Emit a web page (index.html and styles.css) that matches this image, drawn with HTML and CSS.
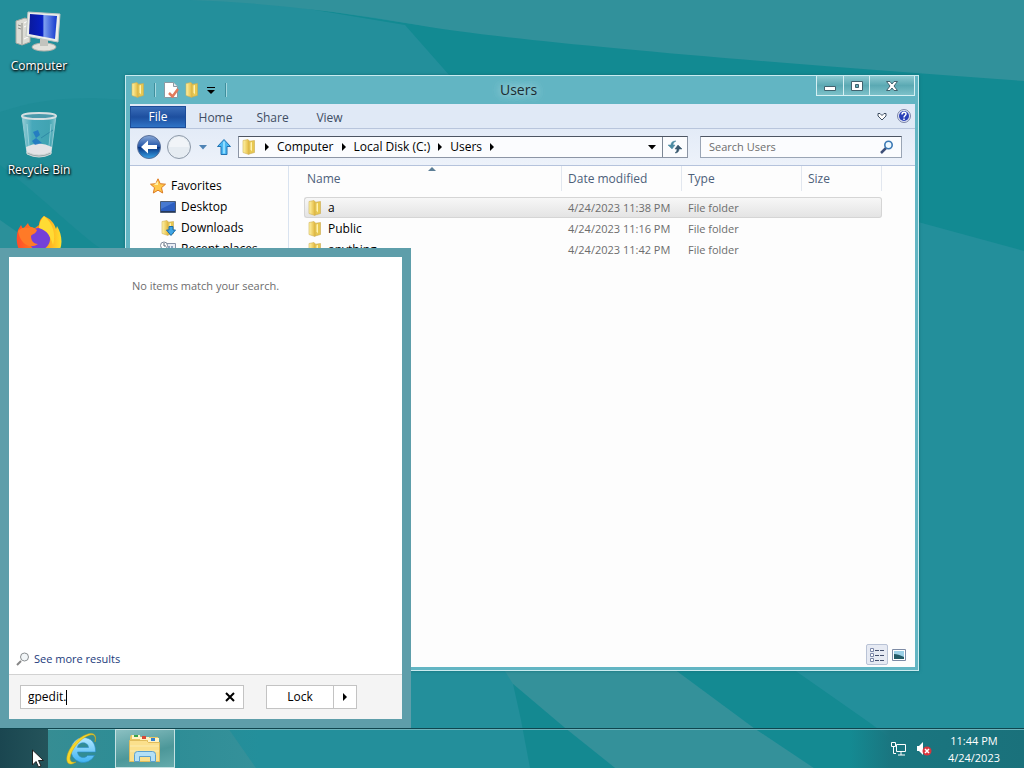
FILE: index.html
```html
<!DOCTYPE html>
<html lang="en">
<head>
  <meta charset="UTF-8" />
  <meta name="viewport" content="width=device-width, initial-scale=1.0" />
  <title>Users</title>
  <link rel="stylesheet" href="styles.css">
</head>
<body>
  <!-- shared gradients and icons -->
  <svg class="defs" aria-hidden="true">
    <defs>
      <linearGradient id="gold" x1="0" x2="1" y1="0" y2="0">
        <stop offset="0" stop-color="#fff3a8" /><stop offset="1" stop-color="#e3b93c" />
      </linearGradient>
      <linearGradient id="screen" x1="0" x2="1" y1="0" y2="0">
        <stop offset="0" stop-color="#0a1a9c" /><stop offset=".48" stop-color="#0820c4" /><stop offset=".54" stop-color="#7fa0f0" /><stop offset="1" stop-color="#1237cc" />
      </linearGradient>
      <linearGradient id="glass" x1="0" x2="1" y1="0" y2="0">
        <stop offset="0" stop-color="#b8dfe6" stop-opacity=".8" /><stop offset=".3" stop-color="#58b4c9" stop-opacity=".7" /><stop offset=".8" stop-color="#57b3c4" stop-opacity=".6" /><stop offset="1" stop-color="#a5d7de" stop-opacity=".8" />
      </linearGradient>
      <linearGradient id="fire" x1="0" x2="1" y1="0" y2="0">
        <stop offset="0" stop-color="#ff4b2b" /><stop offset=".55" stop-color="#ff9018" /><stop offset="1" stop-color="#ffdf2e" />
      </linearGradient>
      <linearGradient id="ball" x1="0" x2="0" y1="0" y2="1">
        <stop offset="0" stop-color="#8aa9d8" /><stop offset=".48" stop-color="#2456a8" /><stop offset=".5" stop-color="#062f7d" /><stop offset="1" stop-color="#39a4e8" />
      </linearGradient>
      <linearGradient id="iblue" x1="0" x2="0" y1="0" y2="1">
        <stop offset="0" stop-color="#b4e9ff" /><stop offset="1" stop-color="#3fb3f2" />
      </linearGradient>
    </defs>
    <symbol id="folder" viewBox="0 0 16 16">
      <path d="M7 2.500 13.500 1.500v12L8 15z" fill="#e8c850" stroke="#c9aa50" stroke-width=".6" />
      <path d="M2 1.500 7 .5l1 1v14L2 13.500z" fill="url(#gold)" stroke="#d2b256" stroke-width=".6" />
      <path d="M9.500 3.500v7l1.500 2V3z" fill="#fff2b0" />
    </symbol>
    <symbol id="right" viewBox="0 0 6 8"><path d="M1 0l4 4-4 4z" fill="currentColor" /></symbol>
    <symbol id="down" viewBox="0 0 8 5"><path d="M0 0h8L4 4.500z" fill="currentColor" /></symbol>
  </svg>

  <main class="desktop">
    <svg class="wallpaper" viewBox="0 0 1024 768" preserveAspectRatio="none" aria-hidden="true">
      <rect width="1024" height="768" fill="#238f9b" />
      <path d="M0 112C40 98 80 96 126 100V248H0z" fill="#1f8c97" />
      <path d="M0 165C40 195 80 235 100 248H0z" fill="#178a93" />
      <path d="M0 220 40 248H0z" fill="#2b909a" />
      <path d="M255 0 418 25 1024 80V251L918 222 450 76 405 25z" fill="#128a92" />
      <path d="M190 0Q300 4 418 25T1024 81V0z" fill="#31919b" />
      <path d="M498 660H662L754 728 814 768H615L565 728 513 684z" fill="#34919a" />
      <path d="M513 684 565 728 615 768H530L521 720z" fill="#148991" />
      <path d="M662 660H780L870 723 930 768H814L754 728z" fill="#148a92" />
      <path d="M180 728H228L256 768H180z" fill="#35919a" />
    </svg>

    <nav class="shortcuts" aria-label="Desktop">
      <a class="shortcut" href="#">
        <svg width="48" height="48" viewBox="0 0 48 48" aria-hidden="true">
          <path d="M1 13l9-3 5 2v22l-8 3-6-2z" fill="#dcdcd5" stroke="#aaa9a2" />
          <path d="M7 15v21M3 17l3 1M3 20l3 1" stroke="#8e8e88" />
          <path d="M9 15l4-2M9 19l4-2M9 31l4-2" stroke="#fff" />
          <ellipse cx="29" cy="39" rx="12" ry="4" fill="#e2e2dc" stroke="#b4b3ab" />
          <path d="M25 31h8v7h-8z" fill="#c3c4be" />
          <path d="M13 4l32 2-2 28-32-6z" fill="#eceeea" stroke="#bfc6c4" />
          <path d="M15 6l27 2-2 23-26-5z" fill="url(#screen)" />
        </svg>
        <span>Computer</span>
      </a>
      <a class="shortcut" href="#">
        <svg width="48" height="48" viewBox="0 0 48 48" aria-hidden="true">
          <path d="M7 4 12 41Q24 47 36 41L41 4z" fill="url(#glass)" stroke="#8ec8d2" />
          <path d="M11 35q13-7 26 0l-1 6q-12 5-24 0z" fill="#e3e3e6" />
          <path d="M12 40q12 6 24 0v2q-12 6-24 0z" fill="#9da9ac" stroke="#d5dada" />
          <path d="M18 20l5-2 2 5-4 3zM17 29l4-3 6 5-7 2z" fill="#1b6fc4" opacity=".75" />
          <path d="M26 26l12-8" stroke="#2f8aa6" />
          <path d="M12 12l2 22M36 12l-2 22" stroke="#c8edf1" opacity=".5" />
          <ellipse cx="24" cy="4" rx="17" ry="3" fill="#4b9aab" stroke="#d5dfe1" stroke-width="2" />
        </svg>
        <span>Recycle Bin</span>
      </a>
      <a class="shortcut" href="#" aria-label="Firefox">
        <svg width="48" height="48" viewBox="0 0 48 48" aria-hidden="true">
          <path d="M29 0c7 3 10 7 12 13l1-3c9 15 5 35-17 36C8 46-2 31 3 14l3-5 2 4 5-6c1 4 3 4 7 5l4-3c0-4 2-7 5-9z" fill="url(#fire)" />
          <circle cx="24" cy="23" r="11" fill="#7440d8" />
          <path d="M3 15c4-4 7-4 11-3 3-1 5 0 8 2-1 4-5 4-6 6 0 4 2 8 7 8-9 6-18-1-20-13z" fill="#ff7a27" />
          <path d="M29 0c9 7 12 18 9 29-3-9-5-14-14-17 0-5 2-9 5-12z" fill="#ffdb34" />
        </svg>
      </a>
    </nav>

    <section class="window" aria-label="Users">
      <header class="titlebar">
        <div class="quick">
          <svg width="16" height="16" aria-hidden="true"><use href="#folder" /></svg>
          <i class="bar"></i>
          <button type="button" aria-label="Properties">
            <svg width="16" height="16" viewBox="0 0 16 16"><path d="M1.500.5h9l4 4v11h-13z" fill="#fff" stroke="#8b9aa3" /><path d="M10.500.5v4h4" fill="#e5e9ed" stroke="#8b9aa3" /><path d="M6 11l3.500 3.500L15 7" fill="none" stroke="#e27a5c" stroke-width="2.500" /></svg>
          </button>
          <button type="button" aria-label="New folder"><svg width="16" height="16"><use href="#folder" /></svg></button>
          <button type="button" aria-label="Customize toolbar">
            <svg width="8" height="7" viewBox="0 0 8 7"><path d="M0 0h8v1H0zM0 3h8L4 7z" /></svg>
          </button>
          <i class="bar"></i>
        </div>
        <h1>Users</h1>
        <div class="controls">
          <button type="button" aria-label="Minimize"><svg width="14" height="14" viewBox="0 0 14 14"><path d="M1.500 7.500h11v4h-11z" fill="#fff" stroke="#41626e" /></svg></button>
          <button type="button" aria-label="Maximize"><svg width="14" height="14" viewBox="0 0 14 14"><path d="M1.500 2.500h11v9h-11z" fill="#fff" stroke="#41626e" /><path d="M5.500 5.500h3v3h-3z" fill="#63adba" stroke="#41626e" /></svg></button>
          <button class="close" type="button" aria-label="Close"><svg width="14" height="14" viewBox="0 0 14 14"><path d="M1.500 2.500h3.500l2 2.500 2-2.500h3.500L9 7l3.500 4.500H9L7 9l-2 2.500H1.500L5 7z" fill="#fff" stroke="#41626e" /></svg></button>
        </div>
      </header>

      <div class="ribbon">
        <button class="file" type="button">File</button>
        <button type="button">Home</button>
        <button type="button">Share</button>
        <button type="button">View</button>
        <div class="ribbon-end">
          <button type="button" aria-label="Expand the ribbon"><svg width="10" height="9" viewBox="0 0 10 9"><path d="M1 1.500h2l2 2 2-2h2v2.500L5 8 1 4z" fill="#fff" stroke="#3f4f63" /></svg></button>
          <button type="button" aria-label="Help">
            <svg width="14" height="14" viewBox="0 0 14 14"><circle cx="7" cy="7" r="6.500" fill="#dfe5f5" stroke="#7d86a8" /><circle cx="7" cy="7" r="5" fill="#2a3fb8" /><path d="M5 5.500c0-3 4-3 4-.500C9 6.500 7 6.500 7 8.500M7 9.500V11" fill="none" stroke="#fff" stroke-width="1.500" /></svg>
          </button>
        </div>
      </div>

      <div class="address">
        <button type="button" aria-label="Back">
          <svg width="26" height="26" viewBox="0 0 26 26"><circle cx="13" cy="13" r="11.500" fill="url(#ball)" stroke="#586f99" /><path d="M5 13l7-6.500v4.500h9v4h-9v4.500z" fill="#fff" /></svg>
        </button>
        <button type="button" aria-label="Forward">
          <svg width="26" height="26" viewBox="0 0 26 26"><circle cx="13" cy="13" r="11.500" fill="#e6ecf2" stroke="#8d99a8" /><path d="M3 13a10 10 0 0 1 20 0z" fill="#f1f4f8" /></svg>
        </button>
        <button class="recent" type="button" aria-label="Recent locations"><svg width="8" height="5"><use href="#down" /></svg></button>
        <button class="up" type="button" aria-label="Up">
          <svg width="14" height="16" viewBox="0 0 14 16"><path d="M7 .5l6.500 7H10v8H4v-8H.5z" fill="#49b7f2" stroke="#2273b3" /><path d="M7 2.500v12" stroke="#8fdcff" stroke-width="2" /></svg>
        </button>
        <div class="path">
          <svg width="16" height="16" aria-hidden="true"><use href="#folder" /></svg>
          <svg width="6" height="8" aria-hidden="true"><use href="#right" /></svg>
          <a href="#">Computer</a>
          <svg width="6" height="8" aria-hidden="true"><use href="#right" /></svg>
          <a href="#">Local Disk (C:)</a>
          <svg width="6" height="8" aria-hidden="true"><use href="#right" /></svg>
          <a href="#">Users</a>
          <svg width="6" height="8" aria-hidden="true"><use href="#right" /></svg>
          <button class="history" type="button" aria-label="Previous locations"><svg width="8" height="5"><use href="#down" /></svg></button>
          <button class="refresh" type="button" aria-label="Refresh">
            <svg width="16" height="14" viewBox="0 0 16 14"><path d="M9 1C5 1 4 3 4 5H1l4 4 3-4H6c0-2 1-3 3-4z" fill="#4c8ba2" stroke="#4c8ba2" stroke-width=".5" /><path d="M8 13c3 0 4-2 4-4h3l-4-4-3 4h2c0 2-1 3-2 4z" fill="#38586f" stroke="#38586f" stroke-width=".5" /></svg>
          </button>
        </div>
        <div class="search">
          <input type="text" aria-label="Search Users" placeholder="Search Users" />
          <svg width="14" height="14" viewBox="0 0 14 14" aria-hidden="true"><path d="M1 13l5-5" stroke="#3e4f78" stroke-width="2.500" /><circle cx="8.500" cy="5" r="3.700" fill="#eef9ff" stroke="#3a78b4" stroke-width="1.600" /></svg>
        </div>
      </div>

      <div class="content">
        <nav class="tree" aria-label="Favorites">
          <a class="root" href="#">
            <svg width="16" height="16" viewBox="0 0 16 16" aria-hidden="true"><path d="M8 .8l2.200 4.900 5.300.5-4 3.500 1.200 5.300L8 12.200 3.300 15l1.200-5.300-4-3.500 5.300-.5z" fill="#ffc84a" stroke="#dc7b24" /><path d="M8 3v4L4 7z" fill="#fff0a8" /></svg>
            Favorites
          </a>
          <a href="#">
            <svg width="16" height="16" viewBox="0 0 16 16" aria-hidden="true"><path d="M.5 2.500h15v11H.5z" fill="#2c5ec0" stroke="#4c5c74" /><path d="M1 3h14L1 10z" fill="#4779d0" /><path d="M1 12h14v1H1z" fill="#26395c" /></svg>
            Desktop
          </a>
          <a href="#">
            <svg width="16" height="16" viewBox="0 0 16 16" aria-hidden="true"><use href="#folder" width="16" height="16" /><path d="M9 6.500h4V10h2.500L11 15.500 6.500 10H9z" fill="#3fa5e4" stroke="#1c6ba9" /></svg>
            Downloads
          </a>
          <a href="#">
            <svg width="16" height="16" viewBox="0 0 16 16" aria-hidden="true"><path d="M5.500 2.500h10v12h-10z" fill="#e9edf4" stroke="#8793a8" /><path d="M8 5h2v2H8zM11 5h2v2h-2zM8 9h2v2H8zM11 9h2v2h-2z" fill="#8ca2bf" /><circle cx="4" cy="4.500" r="3.500" fill="#fff" stroke="#7d8898" /><path d="M4 2v3h2" fill="none" stroke="#596575" /></svg>
            Recent places
          </a>
        </nav>

        <div class="list">
          <table>
            <colgroup><col><col class="c-date"><col class="c-type"><col class="c-size"></colgroup>
            <thead>
              <tr>
                <th><svg class="sort" width="8" height="4" viewBox="0 0 8 4" aria-hidden="true"><path d="M0 4l4-4 4 4z" fill="#5c7e96" /></svg>Name</th>
                <th>Date modified</th>
                <th>Type</th>
                <th>Size</th>
              </tr>
            </thead>
            <tbody>
              <tr class="selected">
                <td><svg width="16" height="16" aria-hidden="true"><use href="#folder" /></svg>a</td>
                <td>4/24/2023 11:38 PM</td>
                <td>File folder</td>
                <td></td>
              </tr>
              <tr>
                <td><svg width="16" height="16" aria-hidden="true"><use href="#folder" /></svg>Public</td>
                <td>4/24/2023 11:16 PM</td>
                <td>File folder</td>
                <td></td>
              </tr>
              <tr>
                <td><svg width="16" height="16" aria-hidden="true"><use href="#folder" /></svg>anything</td>
                <td>4/24/2023 11:42 PM</td>
                <td>File folder</td>
                <td></td>
              </tr>
            </tbody>
          </table>
          <div class="views">
            <button class="on" type="button" aria-label="Details">
              <svg width="16" height="14" viewBox="0 0 16 14"><path d="M1.500.5h3v3h-3zM1.500 5.500h3v3h-3zM1.500 10.500h3v3h-3z" fill="#fff" stroke="#7a86a8" /><path d="M6 2.500h4M11 2.500h4M6 7.500h4M11 7.500h4M6 12.500h4M11 12.500h4" stroke="#44506e" /></svg>
            </button>
            <button type="button" aria-label="Large icons">
              <svg width="14" height="12" viewBox="0 0 14 12"><path d="M.5.5h13v11H.5z" fill="#fff" stroke="#7d8ba5" /><path d="M2 2h10v8H2z" fill="#9bd0e6" /><path d="M2 5q4 0 10 3v2H2z" fill="#235b66" /></svg>
            </button>
          </div>
        </div>
      </div>
    </section>

    <section class="start" aria-label="Start menu">
      <div class="results">
        <p>No items match your search.</p>
        <a href="#">
          <svg width="14" height="14" viewBox="0 0 14 14" aria-hidden="true"><path d="M1 13l4-4" stroke="#858585" stroke-width="2" /><circle cx="8.500" cy="5" r="4" fill="#f2f6f8" stroke="#8b8f92" /></svg>
          See more results
        </a>
      </div>
      <div class="start-foot">
        <div class="query">
          <input type="text" aria-label="Search programs and files" value="gpedit." />
          <i class="caret"></i>
          <button type="button" aria-label="Clear"><svg width="10" height="10" viewBox="0 0 10 10"><path d="M1 1l8 8M9 1L1 9" stroke="#000" stroke-width="2" /></svg></button>
        </div>
        <div class="power">
          <button type="button">Lock</button>
          <button class="more" type="button" aria-label="More power options"><svg width="6" height="8"><use href="#right" /></svg></button>
        </div>
      </div>
    </section>

    <footer class="taskbar">
      <button class="start-btn" type="button" aria-label="Start"></button>
      <button class="task" type="button" aria-label="Internet Explorer">
        <svg width="32" height="34" viewBox="0 0 32 34"><path d="M17 5.500A12.500 12.500 0 1 0 28.500 23.500H21.500C19 27 12 26 11.500 20H29.500C30 11 25 5.500 17 5.500zM11.500 15.500C12 9.500 22 9 22.500 15.500z" fill="url(#iblue)" fill-rule="evenodd" stroke="#2a8fca" stroke-width=".6" /><path d="M29 10C32 0 24-1 14 6 4 13-2 26 2 31c2 2 5 1 8-1-4 1-6 0-6-4C5 18 14 6 24 3c4-1 6 1 5 7z" fill="#f5d62a" stroke="#c9a41a" stroke-width=".5" /></svg>
      </button>
      <button class="task active" type="button" aria-label="File Explorer">
        <svg width="32" height="30" viewBox="0 0 32 30"><path d="M1 3l1-2h8l2 2h17v18H1z" fill="#e9c762" /><path d="M3 1h8v4H3z" fill="#fff3c5" /><path d="M5 1h4v2H5z" fill="#38a548" /><path d="M11 3h9v3h-9z" fill="#fff3c5" /><path d="M13 2h4v3h-4z" fill="#d84a36" /><path d="M19 4h11v4H19z" fill="#fff3c5" /><path d="M22 4h4v3h-4z" fill="#3680cf" /><path d="M.5 6.500h17l2 2h11v19H.5z" fill="#fbe08c" stroke="#e0bc5c" /><path d="M1 12h29M1 17h29" stroke="#fbecb0" /><path d="M5.500 27.500v-7q0-3 3-3h15q3 0 3 3v7h-5v-5h-11v5z" fill="#b4e0f6" stroke="#5ba0cf" /></svg>
      </button>
      <div class="tray">
        <svg width="16" height="14" viewBox="0 0 16 14" role="img" aria-label="Network"><path d="M5.500 2.500h9v7h-9zM10 10v3M7 13h7" fill="none" stroke="#fff" /><path d="M.5.500h4v4h-4zM2.500 5v6.500H5" fill="#1b6d76" stroke="#fff" /></svg>
        <svg width="16" height="14" viewBox="0 0 16 14" role="img" aria-label="Volume muted"><path d="M1 4h2l4-4v13L3 9H1z" fill="#fff" /><circle cx="11" cy="9" r="4.500" fill="#d8363e" /><path d="M9 7l4 4M13 7l-4 4" stroke="#fff" stroke-width="1.500" /></svg>
        <time datetime="2023-04-24T23:44">11:44 PM<br>4/24/2023</time>
      </div>
    </footer>

    <svg class="cursor" width="12" height="19" viewBox="0 0 12 19" aria-hidden="true"><path d="M.5 1v15l3.500-3.500 2.500 5.500 2.500-1-2.500-5.500h5z" fill="#fff" stroke="#222" /></svg>
  </main>
</body>
</html>
```

FILE: styles.css
```css
* {
  box-sizing: border-box;
}
body {
  margin: 0;
  font-family: "Open Sans", "Noto Sans", sans-serif;
  font-size: 12px;
  line-height: 16px;
  color: #000;
}
button, input {
  font: inherit;
  color: inherit;
  margin: 0;
  padding: 0;
  border: 0;
  background: none;
  outline: 0;
}
button {
  display: flex;
  align-items: center;
  justify-content: center;
}
a {
  color: inherit;
  text-decoration: none;
}
svg {
  display: block;
  flex: none;
}
.defs {
  position: absolute;
  width: 0;
  height: 0;
}

/* desktop */
.desktop {
  position: relative;
  display: flex;
  flex-direction: column;
  height: 100vh;
  overflow: hidden;
  background: #238f9b;
}
.wallpaper {
  position: absolute;
  inset: 0;
  width: 100%;
  height: 100%;
}
.shortcuts {
  position: relative;
  flex: 1;
  width: 78px;
  padding-top: 8px;
}
.shortcut {
  display: flex;
  flex-direction: column;
  align-items: center;
  gap: 2px;
  height: 104px;
  color: #fff;
  text-shadow: 1px 1px 2px #000, 0 1px 3px #000;
}

/* explorer window */
.window {
  position: absolute;
  top: 75px;
  right: 105px;
  bottom: 97px;
  left: 125px;
  display: flex;
  flex-direction: column;
  padding: 0 3px 3px 4px;
  border: 1px solid #c9ebef;
  background: #62b5c3;
  box-shadow: 0 0 3px #14707a;
}
.titlebar {
  display: grid;
  grid-template-columns: 1fr auto 1fr;
  height: 28px;
}
.titlebar h1 {
  margin: 0;
  padding-right: 8px;
  align-self: center;
  font-size: 14px;
  font-weight: 400;
  color: #1c2b30;
  text-shadow: 0 0 8px #b5dde4, 0 0 8px #b5dde4;
}
.quick {
  display: flex;
  align-items: center;
  gap: 5px;
}
.quick button:nth-of-type(3) {
  width: 12px;
}
.bar {
  width: 1px;
  height: 14px;
  margin: 0 3px;
  background: #3f8f9d;
  box-shadow: 1px 0 #a6d9e0;
}
.controls {
  justify-self: end;
  display: flex;
  height: 20px;
  border: 1px solid #d5f0f3;
  border-top: 0;
}
.controls button {
  width: 26px;
  background: linear-gradient(#8cc9d0, #5ba9b3 50%, #7cc1c9);
}
.controls button + button {
  border-left: 1px solid #d5f0f3;
}
.controls .close {
  width: 45px;
}
.ribbon {
  display: flex;
  height: 25px;
  padding-top: 2px;
  border-bottom: 1px solid #b8c5dc;
  background: #e0e9f6;
  color: #3f4d63;
}
.ribbon > button {
  width: 57px;
  padding-top: 2px;
}
.ribbon .file {
  width: 56px;
  margin-right: 1px;
  padding-top: 0;
  border: 1px solid #1c4c98;
  background: linear-gradient(#3a6db8, #1d4f9f 50%, #2f73c6);
  color: #fff;
}
.ribbon-end {
  display: flex;
  align-items: center;
  gap: 10px;
  margin-left: auto;
  padding: 0 4px 2px 0;
}
.address {
  display: flex;
  align-items: center;
  height: 37px;
  padding: 0 13px 0 6px;
  border-bottom: 1px solid #b5c3dc;
  background: linear-gradient(#e3ebf7, #edf2fa);
}
.address > button + button {
  margin-left: 4px;
}
.address .recent {
  width: 14px;
  color: #4e83b5;
}
.address .up {
  width: 20px;
}
.path {
  flex: 1;
  display: flex;
  align-items: center;
  gap: 7px;
  height: 22px;
  margin: 0 12px 0 4px;
  padding-left: 2px;
  border: 1px solid #8c95a5;
  border-top-color: #4d5562;
  background: #fbfcfe;
}
.history {
  width: 20px;
  margin-left: auto;
}
.refresh {
  width: 25px;
  height: 20px;
  margin-left: -7px;
  border-left: 1px solid #7c8795;
}
.search {
  display: flex;
  align-items: center;
  width: 202px;
  height: 22px;
  padding: 0 7px 0 8px;
  border: 1px solid #9aa5b5;
  border-top-color: #4d5562;
  background: #fbfcfe;
}
.search input {
  flex: 1;
  min-width: 0;
  font-size: 11px;
}
.search input::placeholder {
  color: #6d6d6d;
  opacity: 1;
}
.content {
  flex: 1;
  display: flex;
  min-height: 0;
  background: #fdfdfd;
}
.tree {
  width: 159px;
  padding: 9px 0 0 30px;
  border-right: 1px solid #d9e3f0;
  overflow: hidden;
}
.tree a {
  display: flex;
  align-items: center;
  gap: 5px;
  height: 21px;
}
.tree .root {
  margin-left: -10px;
}
.list {
  flex: 1;
  display: flex;
  flex-direction: column;
  justify-content: space-between;
  padding: 0 33px 0 15px;
}
table {
  width: 100%;
  table-layout: fixed;
  border-collapse: separate;
  border-spacing: 0;
}
.c-date, .c-type {
  width: 120px;
}
.c-size {
  width: 80px;
}
th {
  position: relative;
  height: 25px;
  padding: 0 6px 0 3px;
  border-right: 1px solid #e2e7ef;
  color: #4c607a;
  font-weight: 400;
  text-align: left;
}
th + th {
  padding-left: 6px;
}
.sort {
  position: absolute;
  top: 1px;
  left: calc(50% - 5px);
}
tbody::before {
  content: "";
  display: block;
  height: 6px;
}
td {
  height: 21px;
  padding: 0 0 0 6px;
  border: 1px solid transparent;
  border-width: 1px 0;
  color: #6d6d6d;
  font-size: 11px;
  white-space: nowrap;
}
td:first-child {
  display: flex;
  align-items: center;
  gap: 5px;
  padding-left: 3px;
  color: #000;
  font-size: 12px;
}
.selected td {
  border-color: #d5d5d5;
  background: linear-gradient(#f7f7f7, #e4e4e4);
}
.selected td:first-child {
  border-left: 1px solid #d5d5d5;
  border-radius: 3px 0 0 3px;
  padding-left: 2px;
}
.selected td:last-child {
  border-right: 1px solid #d5d5d5;
  border-radius: 0 3px 3px 0;
}
.views {
  display: flex;
  align-items: center;
  align-self: flex-end;
  margin: 0 -28px 2px 0;
}
.views button {
  width: 22px;
  height: 21px;
}
.views .on {
  border: 1px solid #b9c3d6;
  border-radius: 2px;
  background: #e6eaf3;
}

/* start menu */
.start {
  position: absolute;
  bottom: 40px;
  left: 0;
  display: flex;
  flex-direction: column;
  width: 411px;
  height: 480px;
  padding: 9px;
  background: #5e9eaa;
}
.results {
  flex: 1;
  display: flex;
  flex-direction: column;
  justify-content: space-between;
  padding: 21px 7px 7px;
  background: #fff;
}
.results p {
  margin: 0;
  color: #6d6d6d;
  font-size: 11px;
  text-align: center;
}
.results a {
  display: flex;
  align-items: center;
  gap: 4px;
  color: #1a3a7c;
  font-size: 11px;
}
.start-foot {
  display: flex;
  align-items: center;
  gap: 22px;
  height: 45px;
  padding: 0 11px;
  border-top: 1px solid #d2d2d2;
  background: #f4f4f4;
}
.query, .power {
  display: flex;
  align-items: center;
  height: 24px;
  border: 1px solid #c3c3c3;
  background: #fff;
}
.query {
  width: 224px;
  padding: 0 8px 0 7px;
}
.query input {
  field-sizing: content;
}
.query button {
  margin-left: auto;
}
.caret {
  width: 1px;
  height: 15px;
  background: #000;
}
.power button {
  width: 66px;
  height: 22px;
}
.power .more {
  width: 23px;
  border-left: 1px solid #c3c3c3;
}

/* taskbar */
.taskbar {
  position: relative;
  display: flex;
  height: 40px;
  border-top: 1px solid #0f454e;
  background: linear-gradient(90deg, #3b8d92, rgba(43, 139, 148, 0.6) 180px, rgba(37, 143, 154, 0) 260px, rgba(26, 118, 128, 0) 850px, #1a7680 890px, #1a717b);
  box-shadow: inset 0 1px #6cb4bc;
}
.start-btn {
  width: 48px;
  background: linear-gradient(90deg, #1a4650, #24545b);
}
.task {
  width: 67px;
}
.task.active {
  width: 60px;
  border: 1px solid #c4e1e2;
  background: linear-gradient(165deg, #8bc0c2, #4c9799 60%, #65abac);
}
.tray {
  display: flex;
  align-items: center;
  gap: 9px;
  margin-left: auto;
  padding-right: 24px;
  color: #fff;
}
.tray time {
  margin-left: 7px;
  font-size: 11px;
  line-height: 17px;
  text-align: center;
}
.cursor {
  position: absolute;
  bottom: 0;
  left: 32px;
}
```
